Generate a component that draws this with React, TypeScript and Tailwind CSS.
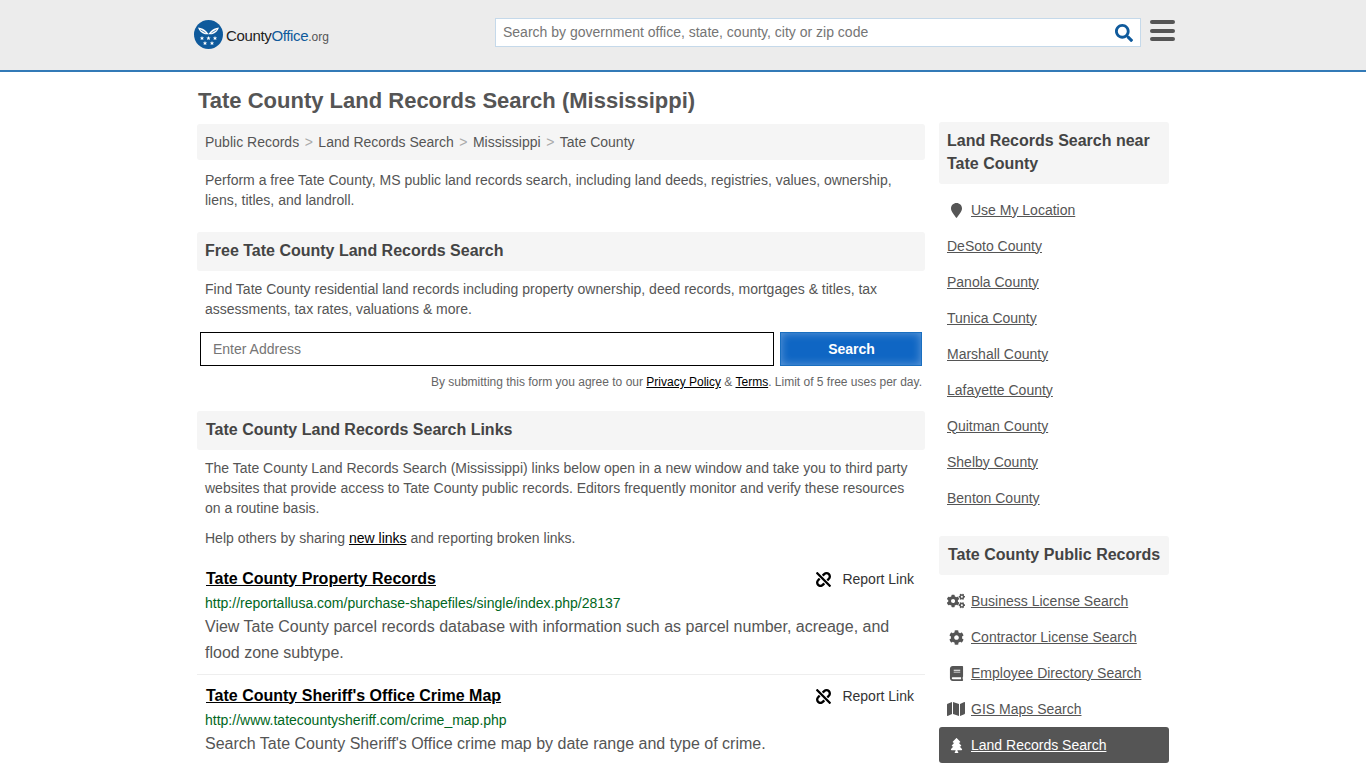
// App.tsx
import { FaBook, FaCog, FaCogs, FaMap, FaSearch, FaTree, FaUnlink } from 'react-icons/fa'

const nearby = ['DeSoto County', 'Panola County', 'Tunica County', 'Marshall County', 'Lafayette County', 'Quitman County', 'Shelby County', 'Benton County']

const records = [
  { label: 'Business License Search', Icon: FaCogs, size: 'text-[18px]' },
  { label: 'Contractor License Search', Icon: FaCog, size: 'text-[15px]' },
  { label: 'Employee Directory Search', Icon: FaBook, size: 'text-[15px]' },
  { label: 'GIS Maps Search', Icon: FaMap, size: 'text-[18px]' },
]

const links = [
  {
    title: 'Tate County Property Records',
    url: 'http://reportallusa.com/purchase-shapefiles/single/index.php/28137',
    text: 'View Tate County parcel records database with information such as parcel number, acreage, and flood zone subtype.',
  },
  {
    title: "Tate County Sheriff's Office Crime Map",
    url: 'http://www.tatecountysheriff.com/crime_map.php',
    text: "Search Tate County Sheriff's Office crime map by date range and type of crime.",
  },
]

const star = 'M0-2l.6 1.400 1.500.100-1.100 1 .4 1.500L0 1.200-1.400 2l.4-1.500-1.100-1 1.500-.100z'

function Logo() {
  return (
    <div className="flex items-center">
      <svg width="29" height="29" viewBox="0 0 29 29" className="shrink-0">
        <circle cx="14.500" cy="14.500" r="14.500" fill="#0f5a9c" />
        <path d="M4 7.500c3.500.4 6.500 1.800 8.500 4l2 2.500 2-2.500c2-2.200 5-3.600 8.500-4-1 3.300-3.500 6-7 6.800h-7C7.500 13.500 5 10.800 4 7.500z" fill="#fff" />
        <path d="M6.500 9.800l5 3M22.500 9.800l-5 3" stroke="#0f5a9c" strokeWidth=".7" />
        <g fill="#fff">
          <path d={star} transform="translate(8 18)" />
          <path d={star} transform="translate(14.500 18)" />
          <path d={star} transform="translate(21 18)" />
          <path d={star} transform="translate(11 23)" />
          <path d={star} transform="translate(18 23)" />
        </g>
      </svg>
      <span className="ml-[3px] mt-[4px] text-[15px] tracking-[-0.35px] text-[#222]">
        County<span className="text-[#0f5a9c]">Office</span>
        <span className="text-[12px] tracking-normal text-[#555]">.org</span>
      </span>
    </div>
  )
}

function Header() {
  return (
    <header className="h-[72px] bg-[#ececec] border-b-2 border-[#337ab7]">
      <div className="ml-[194px] flex items-start pt-[18px]">
        <div className="w-[301px] pt-[2px]">
          <Logo />
        </div>
        <div className="w-[646px] h-[29px] bg-white border border-[#c5d9ea] flex items-center justify-between pl-[7px] pr-[7px]">
          <span className="text-[14px] text-[#757575]">Search by government office, state, county, city or zip code</span>
          <FaSearch className="text-[#0f5a9c] text-[18px]" />
        </div>
        <div className="ml-[9px] mt-[2px] w-[25px] flex flex-col gap-[4.500px]">
          <div className="h-[4px] bg-[#555] rounded-sm" />
          <div className="h-[4px] bg-[#555] rounded-sm" />
          <div className="h-[4px] bg-[#555] rounded-sm" />
        </div>
      </div>
    </header>
  )
}

function Sidebar() {
  return (
    <aside className="w-[230px] pt-[50px]">
      <h3 className="bg-[#f5f5f5] rounded-[3px] px-[8px] pt-[7px] pb-[9px] text-[16px] leading-[23px] font-bold text-[#444]">
        Land Records Search near Tate County
      </h3>
      <div className="mt-[8px] text-[14px] text-[#555]">
        <div className="h-[36px] flex items-center pl-[12px]">
          <svg width="11" height="15" viewBox="0 0 11 15" className="mr-[9px]">
            <path d="M5.500 0C2.500 0 0 2.400 0 5.400 0 8.500 3.800 12.600 5.500 15 7.200 12.600 11 8.500 11 5.400 11 2.400 8.500 0 5.500 0z" fill="#555" />
          </svg>
          <a className="underline">Use My Location</a>
        </div>
        {nearby.map(n => (
          <div key={n} className="h-[36px] flex items-center pl-[8px]">
            <a className="underline">{n}</a>
          </div>
        ))}
      </div>
      <h3 className="mt-[20px] h-[39px] bg-[#f5f5f5] rounded-[3px] pl-[9px] pb-[2px] flex items-center whitespace-nowrap text-[16px] font-bold text-[#444]">
        Tate County Public Records
      </h3>
      <div className="mt-[8px] text-[14px] text-[#555]">
        {records.map(({ label, Icon, size }) => (
          <div key={label} className="h-[36px] flex items-center">
            <span className="w-[32px] pl-[8px] pr-[6px] flex justify-center">
              <Icon className={size} />
            </span>
            <a className="underline">{label}</a>
          </div>
        ))}
        <div className="h-[36px] flex items-center bg-[#555] rounded-[3px] text-white">
          <span className="w-[32px] pl-[8px] pr-[6px] flex justify-center">
            <FaTree className="text-[15px]" />
          </span>
          <a className="underline">Land Records Search</a>
        </div>
      </div>
    </aside>
  )
}

function LinkItem({ title, url, text, first }: { title: string; url: string; text: string; first: boolean }) {
  return (
    <div className={first ? 'h-[109px] border-b border-[#eee] px-[8px]' : 'pt-[6px] px-[8px]'}>
      <div className="flex items-center justify-between h-[25px] mt-[2px]">
        <a className="ml-px text-[16px] font-bold text-black underline">{title}</a>
        <span className="flex items-center mt-[2px] text-[14px] text-[#333] pr-[3px]">
          <FaUnlink className="text-[15px] text-black mr-[11px]" />
          Report Link
        </span>
      </div>
      <div className="text-[14px] leading-[20px] text-[#006621] mt-[2px]">{url}</div>
      <p className="text-[16px] leading-[26px] text-[#555] mt-[1px]">{text}</p>
    </div>
  )
}

export default function App() {
  return (
    <div className="h-[768px] overflow-hidden bg-white font-['Liberation_Sans',Arial,sans-serif]">
      <Header />
      <div className="w-[972px] mx-auto flex justify-between">
        <main className="w-[728px]">
          <h1 className="h-[52px] pl-[1px] pt-[4px] flex items-center text-[22px] font-bold text-[#555]">
            Tate County Land Records Search (Mississippi)
          </h1>
          <nav className="h-[36px] bg-[#f5f5f5] rounded-[3px] px-[8px] flex items-center text-[14px] text-[#555]">
            <span>Public Records</span>
            <span className="mx-[5.500px] text-[#aaa]">&gt;</span>
            <span>Land Records Search</span>
            <span className="mx-[5.500px] text-[#aaa]">&gt;</span>
            <span>Mississippi</span>
            <span className="mx-[5.500px] text-[#aaa]">&gt;</span>
            <span>Tate County</span>
          </nav>
          <p className="mt-[10px] px-[8px] text-[14px] leading-[20px] text-[#555]">
            Perform a free Tate County, MS public land records search, including land deeds, registries, values, ownership, liens, titles, and landroll.
          </p>
          <h2 className="mt-[22px] h-[39px] bg-[#f5f5f5] rounded-[3px] px-[8px] pb-[2px] flex items-center text-[16px] font-bold text-[#444]">
            Free Tate County Land Records Search
          </h2>
          <p className="mt-[8px] px-[8px] text-[14px] leading-[20px] text-[#555]">
            Find Tate County residential land records including property ownership, deed records, mortgages &amp; titles, tax assessments, tax rates, valuations &amp; more.
          </p>
          <form className="mt-[13px] flex pl-[3px] pr-[3px] gap-[6px]">
            <div className="flex-1 h-[34px] border border-black px-[12px] flex items-center text-[14px] text-[#757575]">Enter Address</div>
            <button type="button" className="w-[142px] h-[34px] pl-[1px] border border-[#1a6fc0] bg-[#0f66c4] shadow-[inset_0_0_10px_rgba(255,255,255,0.35)] text-white text-[14px] font-bold">
              Search
            </button>
          </form>
          <p className="mt-[8px] pr-[3px] text-right text-[12px] leading-[16px] text-[#666]">
            By submitting this form you agree to our <a className="text-black underline">Privacy Policy</a> &amp; <a className="text-black underline">Terms</a>. Limit of 5 free uses per day.
          </p>
          <h2 className="mt-[21px] h-[39px] bg-[#f5f5f5] rounded-[3px] px-[9px] pb-[2px] flex items-center text-[16px] font-bold text-[#444]">
            Tate County Land Records Search Links
          </h2>
          <p className="mt-[8px] px-[8px] text-[14px] leading-[20px] text-[#555]">
            The Tate County Land Records Search (Mississippi) links below open in a new window and take you to third party websites that provide access to Tate County public records. Editors frequently monitor and verify these resources on a routine basis.
          </p>
          <p className="mt-[10px] px-[8px] text-[14px] leading-[20px] text-[#555]">
            Help others by sharing <a className="text-black underline">new links</a> and reporting broken links.
          </p>
          <div className="mt-[18px]">
            {links.map((l, i) => (
              <LinkItem key={l.url} {...l} first={i === 0} />
            ))}
          </div>
        </main>
        <Sidebar />
      </div>
    </div>
  )
}
